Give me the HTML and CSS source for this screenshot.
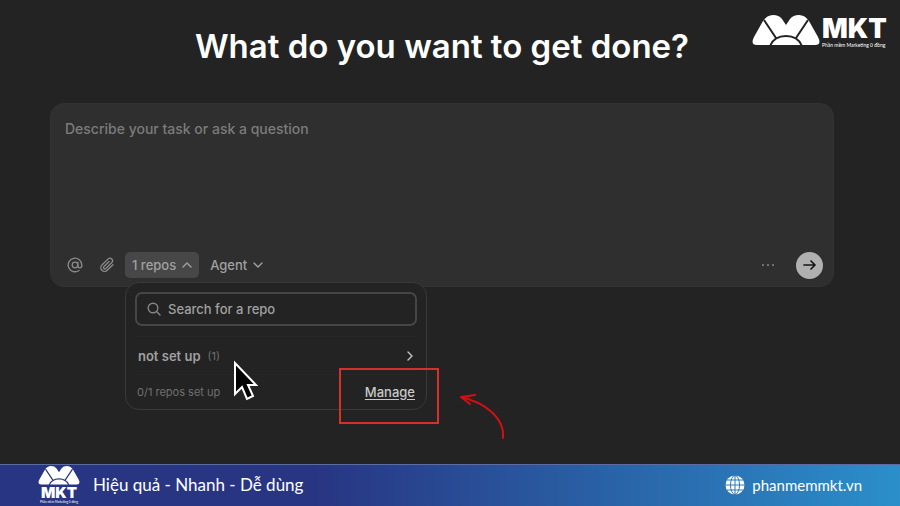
FILE: index.html
```html
<!DOCTYPE html>
<html lang="vi">
<head>
<meta charset="utf-8">
<meta name="viewport" content="width=device-width, initial-scale=1">
<title>MKT</title>
<link rel="stylesheet" href="styles.css">
</head>
<body>
<svg class="defs" aria-hidden="true">
  <symbol id="mark" viewBox="0 0 68 31">
    <path fill="#fff" d="M11 6Q15 0 21 0Q27 0 30 4L34 10L38 4Q41 0 47 0Q53 0 57 6L66 22Q70 30 63 30H5Q-2 30 2 22Z"/>
    <path class="seam" d="M12 5L24 23M56 5L44 23M18 31Q22 21 34 21Q46 21 50 31"/>
  </symbol>
</svg>
<div class="brand">
  <svg class="brand-mark"><use href="#mark"/></svg>
  <div class="brand-words"><strong class="brand-name">MKT</strong><span class="brand-tag">Phần mềm Marketing 0 đồng</span></div>
</div>
<main class="main">
  <h1 class="title">What do you want to get done?</h1>
  <form class="composer">
    <textarea class="prompt" aria-label="Task" placeholder="Describe your task or ask a question"></textarea>
    <div class="toolbar">
      <button class="icon-button" type="button" aria-label="Mention">
        <svg width="16" height="16" viewBox="0 0 24 24" class="line"><circle cx="12" cy="12" r="4.2"/><path d="M16.2 7.8v5.4a3 3 0 0 0 6 0V12a10.2 10.2 0 1 0-4.2 8.2"/></svg>
      </button>
      <button class="icon-button" type="button" aria-label="Attach">
        <svg width="16" height="16" viewBox="0 0 24 24" class="line"><path d="M21 11.5 12.4 20a5.6 5.6 0 0 1-8-8l9.4-9.2a3.9 3.9 0 0 1 5.500 5.500l-9.300 9.200a2 2 0 0 1-2.800-2.800l8-8"/></svg>
      </button>
      <div class="repo-picker">
        <button class="pill pill-open" type="button" aria-expanded="true">1 repos
          <svg width="10" height="10" viewBox="0 0 10 10" class="chevron"><path d="M1 7l4-4 4 4"/></svg>
        </button>
        <section class="menu" aria-label="Repos">
          <label class="search">
            <svg width="14" height="14" viewBox="0 0 14 14" class="chevron search-icon"><circle cx="6" cy="6" r="4.8"/><path d="M9.6 9.6L13 13"/></svg>
            <input class="search-input" type="text" aria-label="Search for a repo" placeholder="Search for a repo">
          </label>
          <button class="group" type="button">
            <span>not set up</span><span class="count">(1)</span>
            <svg width="8" height="10" viewBox="0 0 8 10" class="chevron group-arrow"><path d="M2 1l4 4-4 4"/></svg>
          </button>
          <div class="menu-footer">
            <span>0/1 repos set up</span>
            <a class="manage" href="#">Manage</a>
          </div>
          <div class="highlight"></div>
          <svg class="pointer" width="28" height="42" viewBox="0 0 28 42"><path d="M2 3V34L9 27L14 39L20 36L15 25H23Z"/></svg>
          <svg class="callout" width="50" height="50" viewBox="0 0 50 50"><path d="M46 47C48 26 26 11 4 6M18 4L4 6L13 13"/></svg>
        </section>
      </div>
      <button class="pill" type="button">Agent
        <svg width="10" height="10" viewBox="0 0 10 10" class="chevron"><path d="M1 3l4 4 4-4"/></svg>
      </button>
      <button class="icon-button more" type="button" aria-label="More">
        <svg width="14" height="4" viewBox="0 0 14 4" fill="currentColor"><circle cx="2" cy="2" r="1"/><circle cx="7" cy="2" r="1"/><circle cx="12" cy="2" r="1"/></svg>
      </button>
      <button class="send" type="button" aria-label="Send">
        <svg width="14" height="12" viewBox="0 0 14 12"><path d="M1 6h11M8 2l4 4-4 4"/></svg>
      </button>
    </div>
  </form>
</main>
<footer class="footer">
  <div class="footer-brand">
    <svg class="footer-mark"><use href="#mark"/></svg>
    <strong class="footer-name">MKT</strong>
    <span class="footer-tag">Phần mềm Marketing 0 đồng</span>
  </div>
  <span>Hiệu quả - Nhanh - Dễ dùng</span>
  <a class="site" href="#">
    <svg width="20" height="20" viewBox="0 0 20 20"><circle cx="10" cy="10" r="9.5" fill="#fff"/><g class="grid"><ellipse cx="10" cy="10" rx="4.5" ry="9.5"/><path d="M10 0v20M0 10h20M2 5h16M2 15h16"/></g></svg>
    phanmemmkt.vn
  </a>
</footer>
</body>
</html>
```

FILE: styles.css
```css
* { box-sizing: border-box; }
body {
  margin: 0;
  min-height: 100vh;
  display: flex;
  flex-direction: column;
  background: #232323;
  color: #a0a0a0;
  font-family: Inter, "Liberation Sans", sans-serif;
  font-size: 13px;
}
button, input, textarea { font: inherit; color: inherit; border: 0; background: none; padding: 0; }
a { color: inherit; }
svg { flex: none; display: block; }
.defs { position: absolute; width: 0; height: 0; }
.seam { fill: none; stroke: var(--seam, #232323); stroke-width: 2; }

.brand { position: absolute; top: 15px; right: 14px; display: flex; gap: 2px; color: #fff; }
.brand-mark { width: 68px; height: 31px; }
.brand-words { display: flex; flex-direction: column; width: 64px; }
.brand-name { font-size: 27px; font-weight: 900; line-height: 27px; }
.brand-tag { font-family: Lato, sans-serif; font-size: 5px; line-height: 6px; white-space: nowrap; }

.main { flex: 1; padding: 24px 66px 0 50px; }
.title {
  margin: 0 0 35px;
  color: #fff;
  font-size: 33px;
  line-height: 44px;
  font-weight: 600;
  text-align: center;
}
.composer {
  padding: 15px 10px 7px 14px;
  border: 1px solid #333;
  border-radius: 14px;
  background: #2f2f2f;
}
.prompt {
  display: block;
  width: 100%;
  height: 132px;
  resize: none;
  outline: 0;
  font-size: 14px;
  font-weight: 500;
  line-height: 20px;
}
.prompt::placeholder { color: #7b7b7b; opacity: 1; }
.toolbar { display: flex; align-items: center; height: 28px; }
.icon-button { width: 20px; display: flex; justify-content: center; margin-right: 12px; color: #8a8a8a; }
.line { fill: none; stroke: currentColor; stroke-width: 2; stroke-linecap: round; }
.chevron { fill: none; stroke: currentColor; stroke-width: 1.4; stroke-linecap: round; stroke-linejoin: round; }
.repo-picker { position: relative; margin: 0 4px 0 -4px; }
.pill {
  display: flex;
  align-items: center;
  gap: 6px;
  height: 26px;
  padding: 0 7px;
  border-radius: 5px;
  font-weight: 500;
}
.pill-open { background: #474747; }
.more { margin-left: auto; margin-right: 18px; }
.send {
  width: 27px;
  height: 27px;
  display: grid;
  place-items: center;
  border-radius: 50%;
  background: #b0b0b0;
}
.send path { fill: none; stroke: #161616; stroke-width: 1.7; stroke-linecap: round; stroke-linejoin: round; }

.menu {
  position: absolute;
  z-index: 1;
  top: calc(100% + 4px);
  left: 0;
  width: 302px;
  padding: 9px 9px 7px;
  border: 1px solid #393939;
  border-radius: 14px;
  background: #232323;
}
.search {
  display: flex;
  align-items: center;
  gap: 7px;
  height: 34px;
  padding: 0 10px;
  border: 2px solid #464646;
  border-radius: 7px;
}
.search-icon { color: #858585; }
.search-input { flex: 1; min-width: 0; outline: 0; font-weight: 500; }
.search-input::placeholder { color: #a0a0a0; opacity: 1; }
.group {
  display: flex;
  align-items: center;
  gap: 7px;
  width: 100%;
  height: 39px;
  margin-top: 10px;
  padding: 0 3px;
  border-top: 1px solid #282828;
  border-bottom: 1px solid #272727;
  font-weight: 600;
}
.count { color: #707070; font-size: 11px; font-weight: 400; }
.group-arrow { margin-left: auto; color: #c4c4c4; }
.menu-footer {
  display: flex;
  align-items: center;
  justify-content: space-between;
  height: 27px;
  padding: 6px 2px 0;
  color: #707070;
  font-size: 11px;
}
.manage { color: #c8c8c8; font-size: 13px; font-weight: 500; text-underline-offset: 2px; }
.highlight {
  position: absolute;
  right: -13px;
  bottom: -15px;
  width: 100px;
  height: 56px;
  border: 2px solid #d6302b;
}
.pointer { position: absolute; left: 107px; top: 77px; }
.pointer path { fill: #000; stroke: #fff; stroke-width: 2; }
.callout { position: absolute; left: 331px; top: 108px; }
.callout path { fill: none; stroke: #d40f12; stroke-width: 2; stroke-linecap: round; stroke-linejoin: round; }

.footer {
  display: flex;
  align-items: center;
  gap: 13px;
  height: 42px;
  padding: 0 38px 2px;
  border-top: 1px solid #5d6ba5;
  background: linear-gradient(90deg, #283583 0%, #283583 35%, #2b8fca 100%);
  color: #fff;
  font-family: Lato, sans-serif;
  font-size: 17px;
}
.footer-brand {
  --seam: #283583;
  display: flex;
  flex-direction: column;
  align-items: center;
  width: 42px;
}
.footer-mark { width: 42px; height: 19px; }
.footer-name { font-family: Inter, sans-serif; font-size: 15px; line-height: 15px; font-weight: 900; }
.footer-tag { font-size: 3px; line-height: 4px; white-space: nowrap; }
.site { display: flex; align-items: center; gap: 7px; margin-left: auto; font-size: 15px; text-decoration: none; }
.grid { fill: none; stroke: #2b78b8; stroke-width: 1; }
```
